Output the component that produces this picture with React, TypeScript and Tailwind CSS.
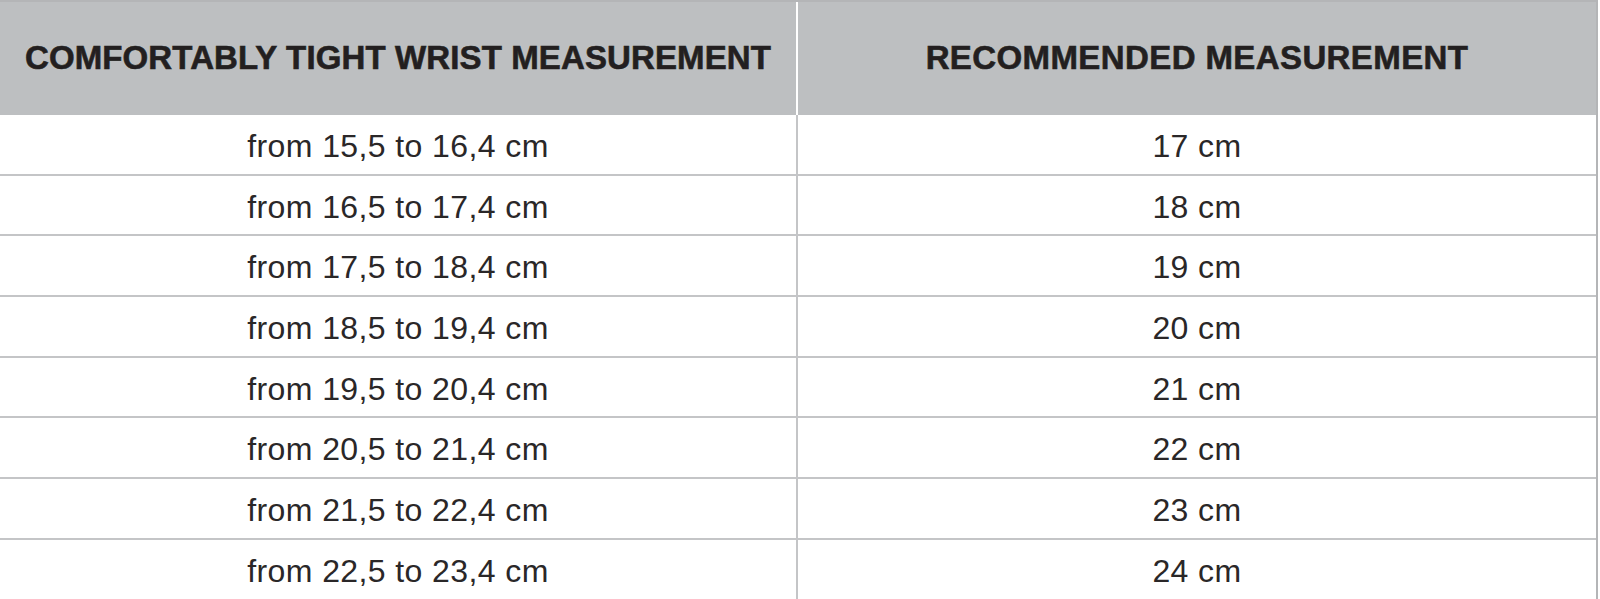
import React from "react";

const rows = [
  ["from 15,5 to 16,4 cm", "17 cm"],
  ["from 16,5 to 17,4 cm", "18 cm"],
  ["from 17,5 to 18,4 cm", "19 cm"],
  ["from 18,5 to 19,4 cm", "20 cm"],
  ["from 19,5 to 20,4 cm", "21 cm"],
  ["from 20,5 to 21,4 cm", "22 cm"],
  ["from 21,5 to 22,4 cm", "23 cm"],
  ["from 22,5 to 23,4 cm", "24 cm"],
];

export default function App() {
  return (
    <div
      className="w-[1600px] h-[599px] overflow-hidden bg-white text-[#231f20]"
      style={{ fontFamily: '"Liberation Sans", Arial, sans-serif' }}
    >
      <div className="w-[1598px] border-t-2 border-r-2 border-[#b4b5b7]">
        <div className="flex h-[113px] bg-[#bdbfc1]">
          <div className="w-[796px] flex items-center justify-center text-[33px] font-bold tracking-[0.12px] pb-[1px] [-webkit-text-stroke:0.6px_#231f20]">
            COMFORTABLY TIGHT WRIST MEASUREMENT
          </div>
          <div className="flex-1 border-l-2 border-white flex items-center justify-center text-[33px] font-bold tracking-[0.4px] pb-[1px] [-webkit-text-stroke:0.6px_#231f20]">
            RECOMMENDED MEASUREMENT
          </div>
        </div>
        {rows.map(([a, b], i) => (
          <div key={i} className="flex h-[60.7px] border-b-2 border-[#c4c5c7]">
            <div className="w-[796px] flex items-center justify-center pt-[3px] text-[32px] tracking-[0.4px] text-[#2a2728]">
              {a}
            </div>
            <div className="flex-1 border-l-2 border-[#c4c5c7] flex items-center justify-center pt-[3px] text-[32px] tracking-[0.4px] text-[#2a2728]">
              {b}
            </div>
          </div>
        ))}
      </div>
    </div>
  );
}
